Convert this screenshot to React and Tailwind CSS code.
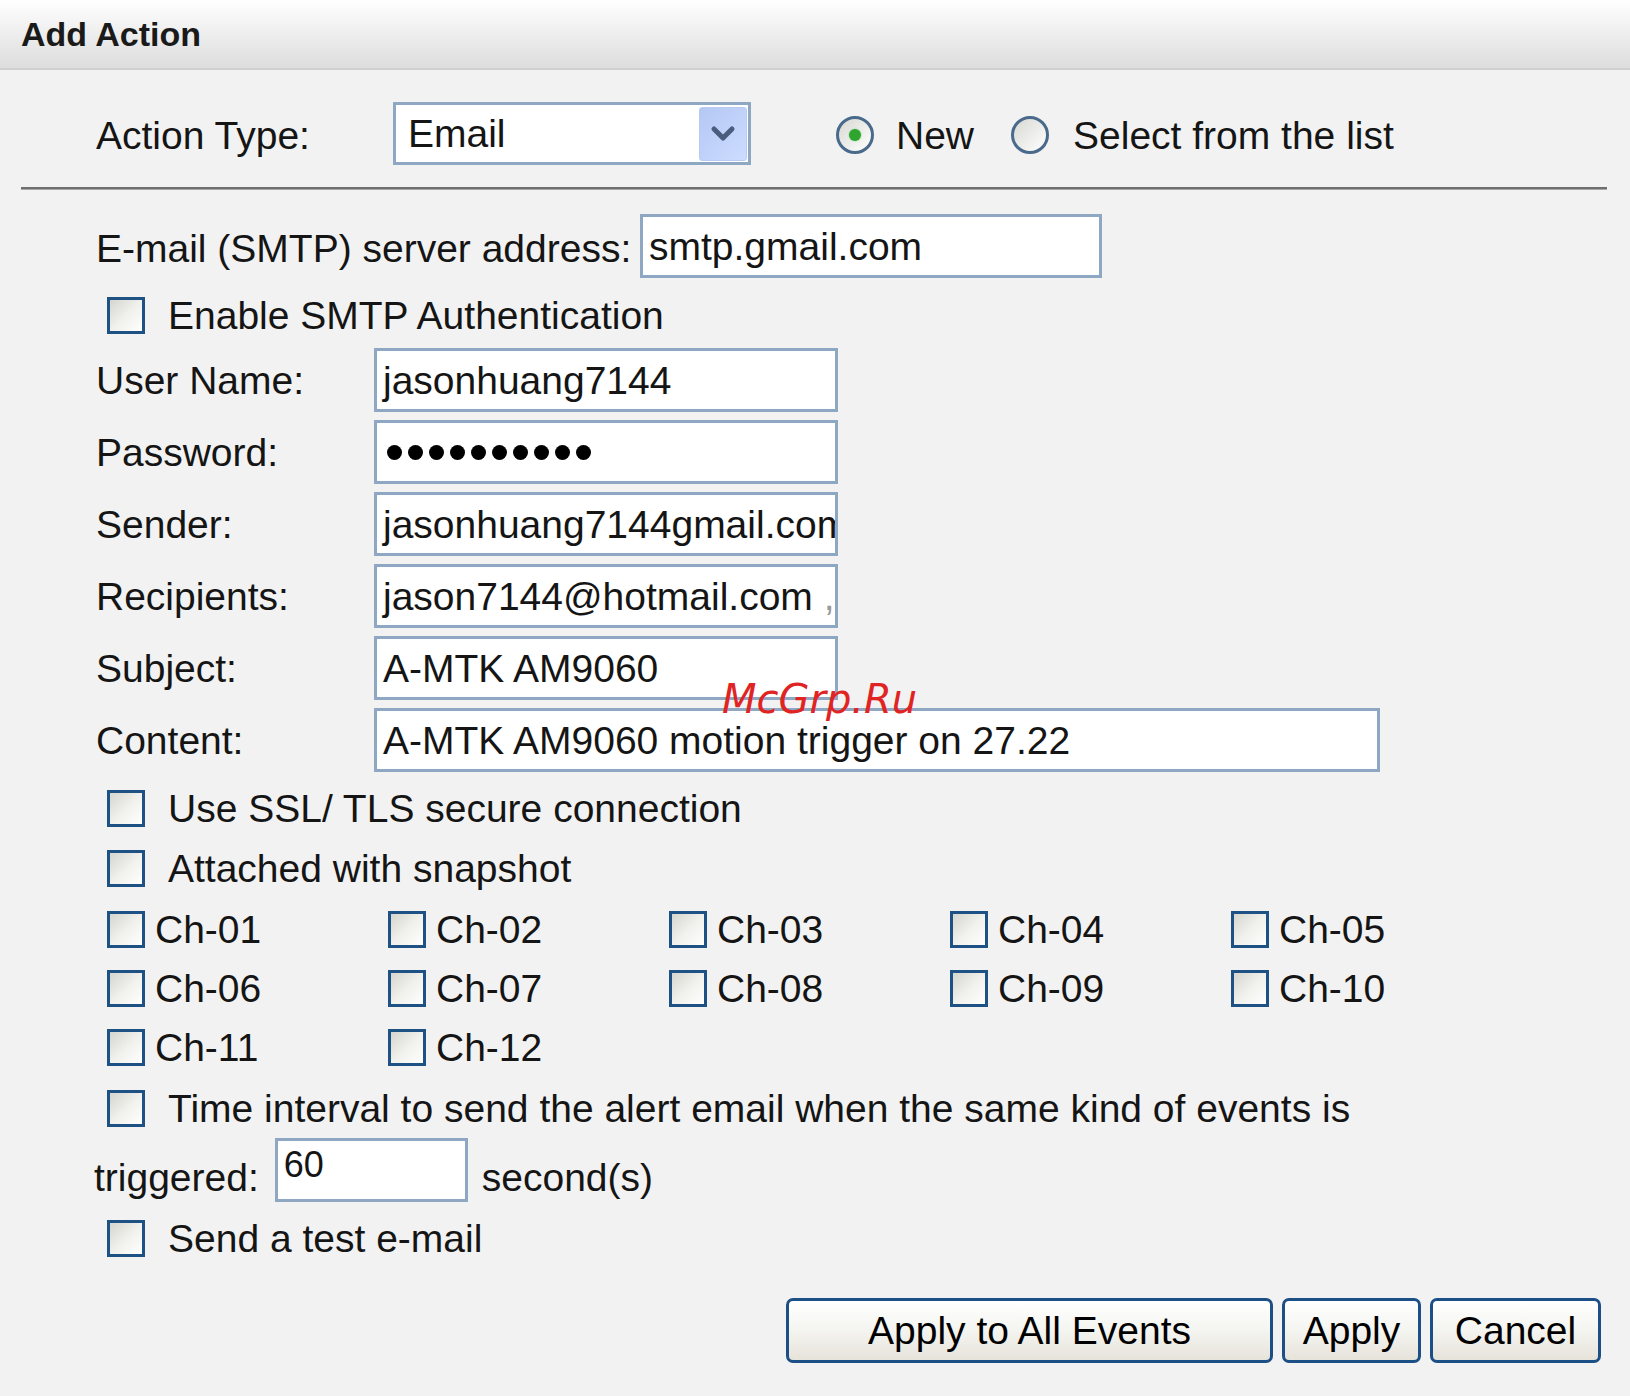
// Add Action dialog (email action form)

const FONT = { fontFamily: '"Liberation Sans", Arial, sans-serif' };

function Checkbox() {
  return (
    <span className="inline-block w-[38px] h-[37px] shrink-0 border-[3px] border-[#1f5284] bg-gradient-to-br from-[#d6d6d0] via-[#f0f0ec] to-white" />
  );
}

function CheckRow({ label, className = "" }) {
  return (
    <div className={`flex items-center pl-[107px] h-[37px] ${className}`}>
      <Checkbox />
      <span className="ml-[23px] leading-none">{label}</span>
    </div>
  );
}

function Radio({ checked }) {
  return (
    <span className="flex items-center justify-center w-[38px] h-[38px] rounded-full border-[3px] border-[#4a6a8c] bg-gradient-to-br from-[#d8d8d4] to-white shrink-0">
      {checked && <span className="w-[12px] h-[12px] rounded-full bg-[#2fa52f] shadow-[0_0_2px_#7fd27f]" />}
    </span>
  );
}

function TextBox({ value, w = "w-[464px]", className = "" }) {
  return (
    <div
      className={`${w} h-[64px] shrink-0 bg-white border-[3px] border-[#8ea7c3] flex items-center pl-[6px] overflow-hidden whitespace-pre leading-none ${className}`}
    >
      {value}
    </div>
  );
}

function FieldRow({ label, value, w }) {
  return (
    <div className="flex items-center pl-[96px]">
      <span className="w-[278px] leading-none">{label}</span>
      <TextBox value={value} w={w} />
    </div>
  );
}

function XpButton({ children, w }) {
  return (
    <button
      className={`${w} h-[65px] rounded-[7px] border-[3px] border-[#1b4f86] bg-gradient-to-b from-white via-[#f4f4f0] to-[#e6e3da] text-[39px] leading-none text-black`}
      style={FONT}
    >
      {children}
    </button>
  );
}

const CHANNELS = ["01", "02", "03", "04", "05", "06", "07", "08", "09", "10", "11", "12"];

export default function App() {
  return (
    <div className="relative w-[1630px] h-[1396px] bg-[#f2f2f2] text-[39px] text-[#151515]" style={FONT}>
      {/* cabecera */}
      <div className="h-[70px] flex items-center px-[21px] bg-gradient-to-b from-white to-[#dddddd] border-b-2 border-[#d0d0d0]">
        <span className="text-[34px] font-bold text-[#1a1a1a] leading-none">Add Action</span>
      </div>

      {/* tipo de acción */}
      <div className="flex items-center pl-[96px] mt-[32px]">
        <span className="w-[297px] leading-none pt-[3px]">Action Type:</span>
        <div className="w-[358px] h-[63px] bg-white border-[3px] border-[#8ea7c3] flex items-center justify-between pl-[12px] pr-[1px]">
          <span className="leading-none">Email</span>
          <span className="w-[48px] h-[54px] rounded-[3px] bg-gradient-to-br from-[#b4c8f4] to-[#cddcff] border border-[#b9cbf2] flex items-center justify-center">
            <svg width="26" height="18" viewBox="0 0 26 18">
              <polyline points="4,4 13,13 22,4" fill="none" stroke="#4b5d7e" strokeWidth="5" strokeLinecap="round" strokeLinejoin="round" />
            </svg>
          </span>
        </div>
        <div className="ml-[85px] flex items-center pt-[3px]">
          <Radio checked />
          <span className="ml-[22px] leading-none">New</span>
          <span className="ml-[37px]"><Radio /></span>
          <span className="ml-[24px] leading-none">Select from the list</span>
        </div>
      </div>

      <div className="mt-[22px] ml-[21px] w-[1586px] h-[3px] bg-[#6f6f6f] border-b border-[#a8a8a8]" />

      {/* servidor */}
      <div className="flex items-center pl-[96px] mt-[24px]">
        <span className="w-[544px] leading-none pt-[4px]">E-mail (SMTP) server address:</span>
        <TextBox value="smtp.gmail.com" w="w-[462px]" />
      </div>

      <CheckRow label="Enable SMTP Authentication" className="mt-[19px]" />

      <div className="mt-[14px] flex flex-col gap-[8px]">
        <FieldRow label="User Name:" value="jasonhuang7144" />
        <div className="flex items-center pl-[96px]">
          <span className="w-[278px] leading-none">Password:</span>
          <TextBox
            value={
              <span className="flex gap-[6px] pl-[4px]">
                {Array.from({ length: 10 }).map((_, i) => (
                  <span key={i} className="w-[15px] h-[15px] rounded-full bg-black" />
                ))}
              </span>
            }
          />
        </div>
        <FieldRow label="Sender:" value="jasonhuang7144gmail.com" />
        <FieldRow label="Recipients:" value={<>jason7144@hotmail.com{" "}<span className="text-[#9a9a9a]">,</span></>} />
        <FieldRow label="Subject:" value="A-MTK AM9060" />
        <FieldRow label="Content:" value="A-MTK AM9060 motion trigger on 27.22" w="w-[1006px]" />
      </div>

      <CheckRow label="Use SSL/ TLS secure connection" className="mt-[18px]" />
      <CheckRow label="Attached with snapshot" className="mt-[23px]" />

      {/* canales */}
      <div className="mt-[23px] pl-[107px] grid grid-cols-[281px_281px_281px_281px_281px] gap-y-[21px]">
        {CHANNELS.map((c) => (
          <div key={c} className="flex items-center h-[38px]">
            <Checkbox />
            <span className="ml-[10px] leading-none">Ch-{c}</span>
          </div>
        ))}
      </div>

      <CheckRow label="Time interval to send the alert email when the same kind of events is" className="mt-[24px]" />

      <div className="flex items-end pl-[94px] mt-[11px]">
        <span className="leading-none mb-[5px]">triggered:</span>
        <TextBox value={<span className="text-[36px]">60</span>} w="w-[193px]" className="ml-[16px] h-[63px] pb-[10px]" />
        <span className="leading-none mb-[5px] ml-[14px]">second(s)</span>
      </div>

      <CheckRow label="Send a test e-mail" className="mt-[18px]" />

      <div className="mt-[41px] flex justify-end gap-[9px] pr-[29px]">
        <XpButton w="w-[487px]">Apply to All Events</XpButton>
        <XpButton w="w-[139px]">Apply</XpButton>
        <XpButton w="w-[171px]">Cancel</XpButton>
      </div>

      {/* marca de agua */}
      <span
        className="absolute left-[722px] top-[679px] text-[40px] italic leading-none text-[#e02424]"
        style={{ fontFamily: '"DejaVu Sans", sans-serif' }}
      >
        McGrp.Ru
      </span>
    </div>
  );
}
